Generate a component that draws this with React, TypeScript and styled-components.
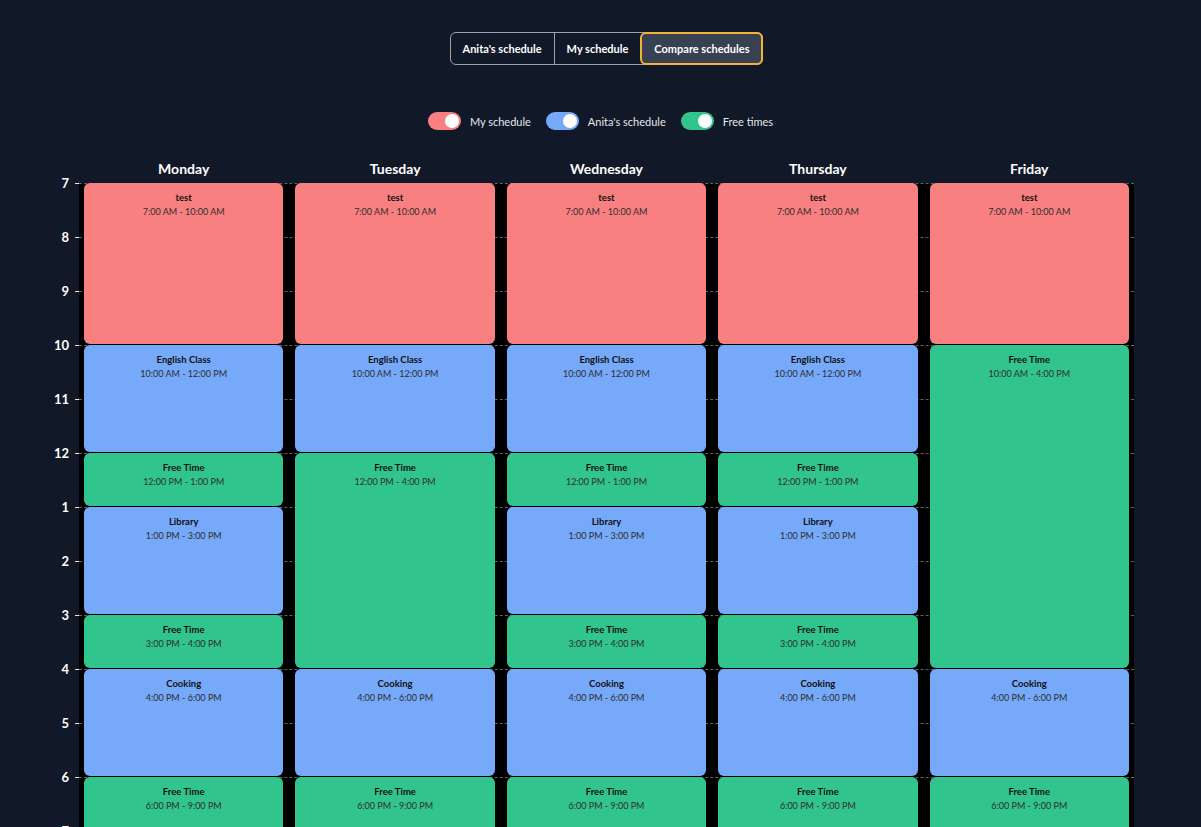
import React, { useState } from "react";
import styled, { createGlobalStyle } from "styled-components";

const HOUR = 54;
const START = 7;
const END = 21;

type Kind = "mine" | "anita" | "free";

interface Slot {
  title: string;
  from: number;
  to: number;
  kind: Kind;
}

const colors: Record<Kind, string> = {
  mine: "#f98080",
  anita: "#76a9fa",
  free: "#31c48d",
};

const fmt = (h: number) => {
  const ampm = h >= 12 ? "PM" : "AM";
  const hh = h % 12 === 0 ? 12 : h % 12;
  return `${hh}:00 ${ampm}`;
};

const regularDay: Slot[] = [
  { title: "test", from: 7, to: 10, kind: "mine" },
  { title: "English Class", from: 10, to: 12, kind: "anita" },
  { title: "Free Time", from: 12, to: 13, kind: "free" },
  { title: "Library", from: 13, to: 15, kind: "anita" },
  { title: "Free Time", from: 15, to: 16, kind: "free" },
  { title: "Cooking", from: 16, to: 18, kind: "anita" },
  { title: "Free Time", from: 18, to: 21, kind: "free" },
];

const days: { name: string; slots: Slot[] }[] = [
  { name: "Monday", slots: regularDay },
  {
    name: "Tuesday",
    slots: [
      { title: "test", from: 7, to: 10, kind: "mine" },
      { title: "English Class", from: 10, to: 12, kind: "anita" },
      { title: "Free Time", from: 12, to: 16, kind: "free" },
      { title: "Cooking", from: 16, to: 18, kind: "anita" },
      { title: "Free Time", from: 18, to: 21, kind: "free" },
    ],
  },
  { name: "Wednesday", slots: regularDay },
  { name: "Thursday", slots: regularDay },
  {
    name: "Friday",
    slots: [
      { title: "test", from: 7, to: 10, kind: "mine" },
      { title: "Free Time", from: 10, to: 16, kind: "free" },
      { title: "Cooking", from: 16, to: 18, kind: "anita" },
      { title: "Free Time", from: 18, to: 21, kind: "free" },
    ],
  },
];

const hours = Array.from({ length: END - START }, (_, i) => START + i);

const GlobalStyle = createGlobalStyle`
  body {
    margin: 0;
    background: #111827;
    font-family: Lato, "Noto Sans", sans-serif;
    color: #fff;
  }
`;

const App = () => {
  const [tab, setTab] = useState("compare");
  const [shown, setShown] = useState<Record<Kind, boolean>>({
    mine: true,
    anita: true,
    free: true,
  });

  const toggle = (k: Kind) => setShown({ ...shown, [k]: !shown[k] });

  return (
    <>
      <GlobalStyle />
      <Page>
        <Tabs>
          <TabBtn active={tab === "anita"} onClick={() => setTab("anita")}>
            Anita's schedule
          </TabBtn>
          <TabBtn active={tab === "mine"} onClick={() => setTab("mine")}>
            My schedule
          </TabBtn>
          <TabBtn active={tab === "compare"} onClick={() => setTab("compare")}>
            Compare schedules
          </TabBtn>
        </Tabs>

        <Legend>
          <LegendItem onClick={() => toggle("mine")}>
            <Switch color={colors.mine} on={shown.mine} />
            My schedule
          </LegendItem>
          <LegendItem onClick={() => toggle("anita")}>
            <Switch color={colors.anita} on={shown.anita} />
            Anita's schedule
          </LegendItem>
          <LegendItem onClick={() => toggle("free")}>
            <Switch color={colors.free} on={shown.free} />
            Free times
          </LegendItem>
        </Legend>

        <Schedule>
          <span />
          <DayHeads>
            {days.map((d) => (
              <DayName key={d.name}>{d.name}</DayName>
            ))}
          </DayHeads>

          <HourCol>
            {hours.map((h) => (
              <HourRow key={h}>
                <HourLabel>{h % 12 === 0 ? 12 : h % 12}</HourLabel>
                <Tick />
              </HourRow>
            ))}
          </HourCol>

          <Board>
            <Lines>
              {hours.map((h) => (
                <Line key={h} />
              ))}
            </Lines>
            <Columns>
              {days.map((d) => (
                <DayCol key={d.name}>
                  {d.slots.map((s, i) => (
                    <Block
                      key={i}
                      bg={colors[s.kind]}
                      hidden={!shown[s.kind]}
                      style={{ height: (s.to - s.from) * HOUR - 1 }}
                    >
                      <BlockTitle>{s.title}</BlockTitle>
                      <BlockTime>
                        {fmt(s.from)} - {fmt(s.to)}
                      </BlockTime>
                    </Block>
                  ))}
                </DayCol>
              ))}
            </Columns>
          </Board>
        </Schedule>
      </Page>
    </>
  );
};

const Page = styled.div`
  padding-top: 32px;
  display: flex;
  flex-direction: column;
  align-items: center;
`;

const Tabs = styled.div`
  display: flex;
  height: 33px;
  margin-left: 12px;
  border: 1px solid #9ca3af;
  border-radius: 6px;
  box-sizing: border-box;
`;

const TabBtn = styled.button<{ active: boolean }>`
  font-family: inherit;
  font-size: 11px;
  font-weight: 700;
  color: #fff;
  padding: 0 12px;
  margin: -1px 0;
  background: ${(p) => (p.active ? "#374151" : "transparent")};
  border: none;
  border-radius: 0;
  cursor: pointer;
  & + & {
    border-left: 1px solid #9ca3af;
  }
  &:last-child {
    margin-right: -1px;
  }
  ${(p) =>
    p.active &&
    `
    && { border: 2px solid #f2b233; }
    border-radius: 6px;
  `}
`;

const Legend = styled.div`
  display: flex;
  gap: 15px;
  margin-top: 47px;
`;

const LegendItem = styled.label`
  display: flex;
  align-items: center;
  gap: 9px;
  font-size: 11px;
  color: #e5e7eb;
  cursor: pointer;
`;

const Switch = styled.span<{ color: string; on: boolean }>`
  position: relative;
  width: 33px;
  height: 18px;
  border-radius: 9px;
  background: ${(p) => (p.on ? p.color : "#4b5563")};
  &::after {
    content: "";
    position: absolute;
    top: 2px;
    left: ${(p) => (p.on ? "17px" : "2px")};
    width: 14px;
    height: 14px;
    border-radius: 50%;
    background: #fff;
  }
`;

const Schedule = styled.div`
  align-self: flex-start;
  margin: 29px 0 0 50px;
  display: grid;
  grid-template-columns: 29px 1055px;
  padding-bottom: 20px;
`;

const DayHeads = styled.div`
  display: grid;
  grid-template-columns: repeat(5, 1fr);
  gap: 12px;
  padding: 0 5px;
  height: 24px;
`;

const DayName = styled.div`
  text-align: center;
  font-size: 14px;
  font-weight: 700;
  line-height: 20px;
`;

const HourCol = styled.div`
  display: flex;
  flex-direction: column;
`;

const HourRow = styled.div`
  height: ${HOUR}px;
  display: flex;
  align-items: flex-start;
  justify-content: flex-end;
`;

const HourLabel = styled.span`
  font-size: 13px;
  font-weight: 700;
  line-height: 14px;
  margin-top: -7px;
`;

const Tick = styled.span`
  width: 4px;
  height: 1px;
  margin-left: 6px;
  background: #e5e7eb;
`;

const Board = styled.div`
  display: grid;
  background: #000;
  & > * {
    grid-area: 1 / 1;
  }
`;

const Lines = styled.div`
  display: flex;
  flex-direction: column;
`;

const Line = styled.div`
  height: ${HOUR}px;
  box-sizing: border-box;
  border-top: 1px dashed #5b616b;
`;

const Columns = styled.div`
  display: grid;
  grid-template-columns: repeat(5, 1fr);
  gap: 12px;
  padding: 0 5px;
`;

const DayCol = styled.div`
  display: flex;
  flex-direction: column;
`;

const Block = styled.div<{ bg: string; hidden?: boolean }>`
  margin-top: 1px;
  background: ${(p) => p.bg};
  visibility: ${(p) => (p.hidden ? "hidden" : "visible")};
  border-radius: 6px;
  text-align: center;
  padding-top: 8px;
  box-sizing: border-box;
  &:first-child {
    margin-top: 0;
    height: ${HOUR * 3}px;
  }
`;

const BlockTitle = styled.div`
  font-size: 9.5px;
  font-weight: 700;
  line-height: 14px;
  color: #111;
`;

const BlockTime = styled.div`
  font-size: 9px;
  line-height: 14px;
  color: #2e2e2e;
`;

export default App;
